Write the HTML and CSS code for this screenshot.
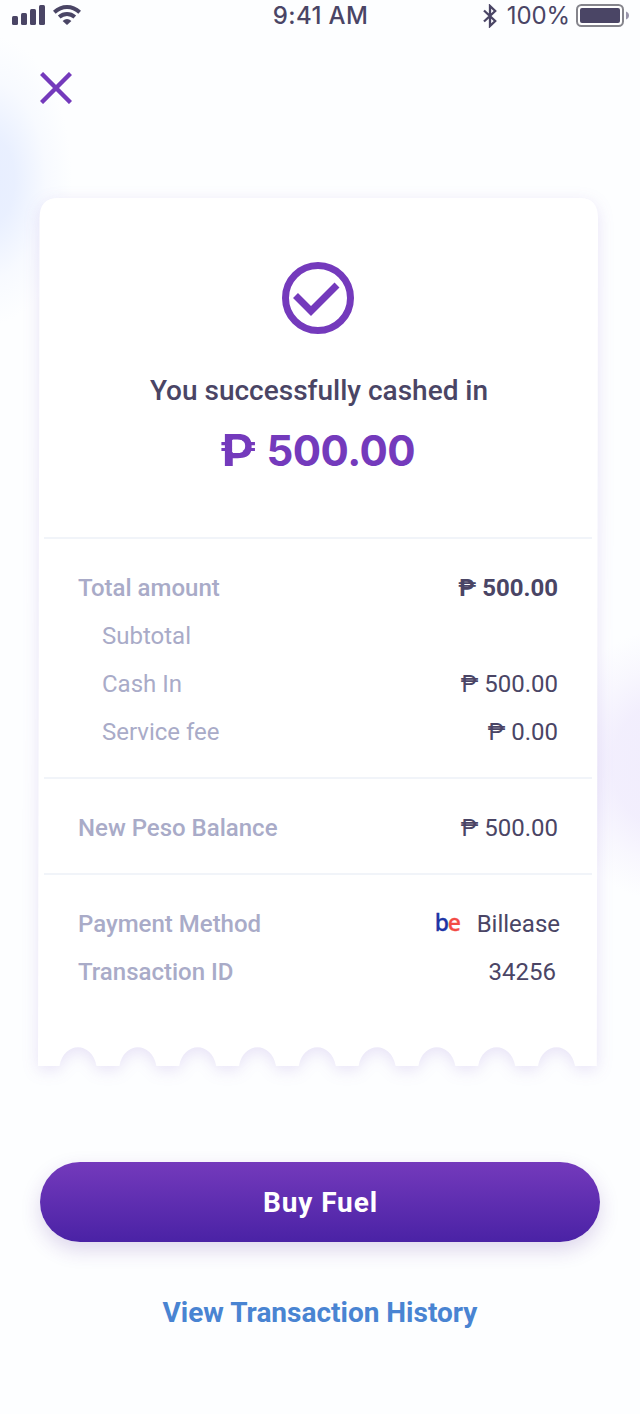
FILE: index.html
```html
<!DOCTYPE html>
<html lang="en">
<head>
<meta charset="utf-8">
<meta name="viewport" content="width=device-width">
<title>Cash In Receipt</title>
<link rel="stylesheet" href="styles.css">
</head>
<body>
<main class="screen">
  <header class="status">
    <div class="status-left">
      <svg width="33" height="20" viewBox="0 0 33 20"><rect y="11" width="6" height="9" rx="1.5"/><rect x="9" y="8" width="6" height="12" rx="1.5"/><rect x="18" y="4" width="6" height="16" rx="1.5"/><rect x="27" width="6" height="20" rx="1.5"/></svg>
      <svg class="wifi" width="28" height="20" viewBox="0 0 28 20"><g fill="none" stroke="#4a4565" stroke-width="4"><path d="M1.3 7.2Q7 2 14 2t12.700 5.200"/><path d="M6.200 12Q9.700 9 14 9t7.800 3"/></g><path d="M9.600 16q4.400-4.200 8.800 0L14 20z"/></svg>
    </div>
    <span class="time">9:41 AM</span>
    <div class="status-right">
      <svg width="14" height="24" viewBox="0 0 14 24"><path d="M1 6.500 12.200 17 7 22V2l5.200 5L1 17.500" fill="none" stroke="#4a4565" stroke-width="2.300"/></svg>
      <span class="percent">100%</span>
      <svg class="battery" width="53" height="24" viewBox="0 0 53 24"><rect x="1" y="1" width="46" height="21" rx="4.500" fill="#fff" stroke="#85858c" stroke-width="2"/><rect x="4" y="4" width="40" height="15" rx="2"/><path d="M50 7.500q3 1.200 3 4t-3 4z" fill="#9995aa"/></svg>
    </div>
  </header>
  <button class="close" aria-label="Close"><svg width="32" height="32" viewBox="0 0 32 32"><path d="M1.500 1.500 30.500 30.500M30.500 1.500 1.500 30.500" fill="none" stroke="#743abc" stroke-width="4.400"/></svg></button>

  <section class="receipt">
    <svg class="paper" width="562" height="870" viewBox="0 0 562 870"><path d="M1.500 20Q1.500 0 20 0H542Q560 0 560 20L558.800 868H537C532.500 843 504.500 843 500 868H477.200C472.700 843 444.700 843 440.200 868H417.400C412.900 843 384.900 843 380.400 868H357.600C353.100 843 325.100 843 320.600 868H297.800C293.300 843 265.300 843 260.800 868H238C233.500 843 205.500 843 201 868H178.200C173.700 843 145.700 843 141.200 868H118.400C113.900 843 85.900 843 81.400 868H58.500C54 843 26 843 21.500 868H0Z" fill="#fff"/></svg>
    <div class="content">
      <div class="summary">
        <svg class="check" width="72" height="72" viewBox="0 0 72 72"><circle cx="36" cy="36" r="32.500" fill="none" stroke="#743abc" stroke-width="7"/><path d="M13.500 33.500 29 49 55 23" fill="none" stroke="#743abc" stroke-width="7"/></svg>
        <h1>You successfully cashed in</h1>
        <p class="amount"><span class="peso">₱</span><span class="digits">500.00</span></p>
      </div>
      <dl class="group">
        <div class="row strong"><dt>Total amount</dt><dd>₱ 500.00</dd></div>
        <div class="row sub"><dt>Subtotal</dt></div>
        <div class="row sub"><dt>Cash In</dt><dd>₱ 500.00</dd></div>
        <div class="row sub"><dt>Service fee</dt><dd>₱ 0.00</dd></div>
      </dl>
      <dl class="group">
        <div class="row"><dt>New Peso Balance</dt><dd>₱ 500.00</dd></div>
      </dl>
      <dl class="group">
        <div class="row method"><dt>Payment Method</dt><dd><span class="brand"><span>b</span><em>e</em></span>Billease</dd></div>
        <div class="row transaction"><dt>Transaction ID</dt><dd>34256</dd></div>
      </dl>
    </div>
  </section>
  <button class="buy">Buy Fuel</button>
  <a class="history"><span>View Transaction History</span></a>
</main>
</body>
</html>
```
FILE: styles.css
```css
* { box-sizing: border-box; }
body { margin: 0; font-family: Roboto, sans-serif; color: #4a4565; }
h1, p, dl, dd { margin: 0; }
svg { display: block; flex: none; fill: #4a4565; }
button { border: 0; padding: 0; background: none; font: inherit; }
.screen {
  width: 640px; height: 1414px; overflow: hidden;
  display: flex; flex-direction: column;
  background:
    radial-gradient(ellipse 82px 145px at -10px 180px, #e7eeff 0%, rgba(231, 238, 255, .9) 30%, rgba(231, 238, 255, .25) 68%, rgba(231, 238, 255, 0) 100%),
    radial-gradient(ellipse 110px 135px at 662px 765px, #f1edfd 0%, rgba(241, 237, 253, .9) 45%, rgba(241, 237, 253, .4) 72%, rgba(241, 237, 253, 0) 100%),
    #fdfeff;
}
.status { display: grid; grid-template-columns: 1fr auto 1fr; height: 32px; padding: 0 11px 0 12px; align-items: center; font: 24px/32px Inter, sans-serif; }
.status-left, .status-right { display: flex; align-items: center; }
.status-left { gap: 8px; padding-bottom: 2px; }
.status-right { justify-content: flex-end; }
.time { font-weight: 500; letter-spacing: .4px; }
.percent { margin: 0 6px 0 10px; letter-spacing: -.1px; }
.close { margin: 40px 0 0 40px; width: 32px; height: 32px; }
.receipt { position: relative; width: 562px; height: 870px; margin: 94px 0 0 38px; }
.paper { position: absolute; inset: 0; overflow: visible; filter: drop-shadow(0 4px 8px rgba(100, 60, 190, .14)); }
.content { position: relative; padding: 64px 8px 0 6px; }
.summary { height: 275px; display: flex; flex-direction: column; align-items: center; }
.check { margin-left: -1px; }
h1 { margin: 40px 0 0 2px; font-size: 28px; line-height: 34px; font-weight: 500; white-space: nowrap; }
.amount { display: flex; align-items: baseline; gap: 13px; margin: 16px 0 0 1px; color: #743abc; line-height: 52px; }
.peso { position: relative; font: 700 44px/52px Inter, sans-serif; transform: scaleX(1.18); }
/* Clears the bars inside the bowl of the peso sign */
.peso::after { content: ""; position: absolute; left: 11px; top: 16px; width: 11px; height: 12px; border-radius: 0 5px 5px 0; background: #fff; }
.digits { font: 700 42px/52px Inter, sans-serif; letter-spacing: -.5px; }
.group { border-top: 2px solid #f1f4f9; padding: 25px 34px 21px; font-size: 24px; line-height: 48px; }
.row { display: flex; justify-content: space-between; }
dt { color: #a9abc8; font-weight: 500; }
.sub dt { padding-left: 24px; font-weight: 400; }
.strong dd { font-weight: 700; }
.method dd { display: flex; margin-right: -2px; }
.transaction dd { margin-right: 2px; }
.brand { display: flex; margin-right: 17px; font: 500 23px/44px "Noto Sans", sans-serif; letter-spacing: -1.300px; color: #1d35a5; -webkit-text-stroke: .3px; }
.brand em { font-style: normal; color: #f34b45; }
.buy { margin: 94px 0 0 40px; padding-left: 1px; width: 560px; height: 80px; flex: none; border-radius: 40px; background: linear-gradient(#743abc, #4a22a5); box-shadow: 0 8px 20px rgba(80, 35, 150, .18); color: #fff; font-size: 28px; font-weight: 700; letter-spacing: .9px; }
.history { margin-top: 53px; text-align: center; color: #4984d2; font-size: 28px; line-height: 36px; font-weight: 700; }
```
